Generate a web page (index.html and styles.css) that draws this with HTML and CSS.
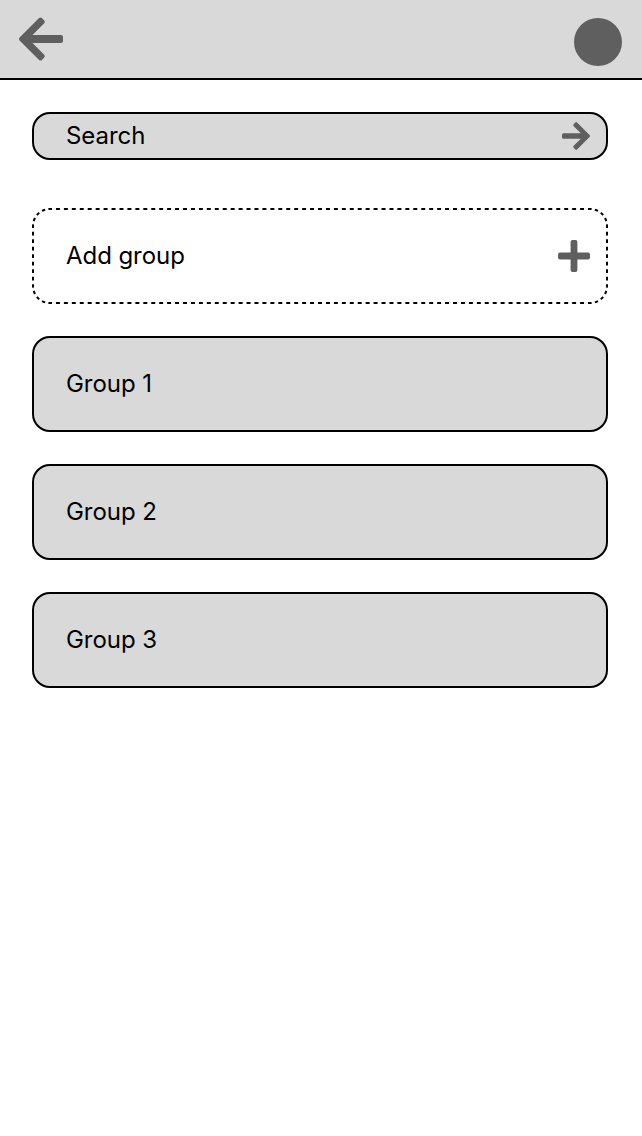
FILE: index.html
```html
<!DOCTYPE html>
<html lang="en">
<head>
<meta charset="utf-8">
<title>Groups</title>
<link rel="stylesheet" href="styles.css">
</head>
<body>
<header class="topbar">
  <svg class="icon" width="44" height="44" viewBox="0 0 44 44" aria-label="Back"><path stroke-width="4" d="M2 22 21.500 2.500 23.800 4.800 8.600 20H42V24H8.600L23.800 39.200 21.500 41.500Z"/></svg>
  <div class="avatar"></div>
</header>
<main class="content">
  <div class="search"><span>Search</span>
    <svg class="icon" width="28" height="28" viewBox="0 0 28 28"><path stroke-width="3" d="M26.500 14 14.200 1.700 12.800 3.100 22.400 12.700H1.500V15.300H22.400L12.800 24.900 14.200 26.300Z"/></svg>
  </div>
  <div class="card add">
    <svg class="outline" width="576" height="96" viewBox="0 0 576 96">
      <path pathLength="68" d="M18 1H558"/>
      <path pathLength="4" d="M558 1A17 17 0 0 1 575 18"/>
      <path pathLength="8" d="M575 18V78"/>
      <path pathLength="4" d="M575 78A17 17 0 0 1 558 95"/>
      <path pathLength="68" d="M558 95H18"/>
      <path pathLength="4" d="M18 95A17 17 0 0 1 1 78"/>
      <path pathLength="8" d="M1 78V18"/>
      <path pathLength="4" d="M1 18A17 17 0 0 1 18 1"/>
    </svg>
    <span>Add group</span>
    <svg width="32" height="32" viewBox="0 0 32 32" fill="#5f5f5f"><rect x="12.600" width="6.800" height="32" rx="2"/><rect y="12.600" width="32" height="6.800" rx="2"/></svg>
  </div>
  <div class="card">Group 1</div>
  <div class="card">Group 2</div>
  <div class="card">Group 3</div>
</main>
</body>
</html>
```
FILE: styles.css
```css
* { box-sizing: border-box; }
body { margin: 0; background: #fff; color: #000; font: 400 24px/30px Inter, sans-serif; letter-spacing: -0.06px; }
svg { display: block; flex: none; }
.icon { fill: #5f5f5f; stroke: #5f5f5f; stroke-linejoin: round; overflow: visible; }
.topbar { display: flex; justify-content: space-between; height: 80px; padding: 17px 20px 0 19px; background: #d9d9d9; border-bottom: 2px solid #000; }
.avatar { width: 48px; height: 48px; margin-top: 1px; border-radius: 50%; background: #5f5f5f; }
.content { display: flex; flex-direction: column; gap: 32px; width: 640px; padding: 32px; }
.search, .card { display: flex; align-items: center; justify-content: space-between; padding: 0 16px 0 32px; background: #d9d9d9; border: 2px solid #000; border-radius: 18px; }
.search { height: 48px; margin-bottom: 16px; }
.card { height: 96px; }
.add { position: relative; background: none; border-color: transparent; }
.outline { position: absolute; left: -2px; top: -2px; fill: none; stroke: #000; stroke-width: 2; stroke-dasharray: 0.5 0.5; stroke-dashoffset: 0.25; }
```
